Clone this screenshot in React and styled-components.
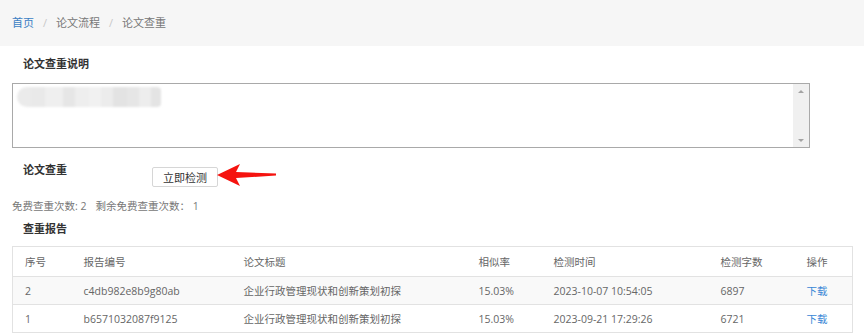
import styled, { createGlobalStyle } from "styled-components";

const GlobalStyle = createGlobalStyle`
  body {
    margin: 0;
    background: #fff;
    font-family: "Open Sans", "Noto Sans CJK SC", sans-serif;
    font-size: 10.5px;
    color: #666;
  }
`;

const Breadcrumb = styled.div`
  height: 46px;
  line-height: 46px;
  background: #f6f6f6;
  padding-left: 12px;
  color: #777;
  display: flex;
  gap: 9px;
  font-size: 11px;
`;

const Crumb = styled.span`
  color: ${(p) => (p.$active ? "#3b7fc4" : "#777")};
`;

const Sep = styled.span`
  color: #c8c8c8;
`;

const Page = styled.div`
  padding: 0 12px;
  display: flex;
  flex-direction: column;
  align-items: flex-start;
`;

const SectionTitle = styled.div`
  font-weight: bold;
  font-size: 11px;
  color: #333;
  margin-left: 11px;
  line-height: ${(p) => p.$lh || 14}px;
  margin-top: ${(p) => p.$mt || 0}px;
  width: ${(p) => (p.$w ? p.$w + "px" : "auto")};
  flex-shrink: 0;
`;

const TextBox = styled.div`
  margin-top: 9px;
  width: 798px;
  height: 65px;
  box-sizing: border-box;
  border: 1px solid #a9a9a9;
  display: flex;
  justify-content: space-between;
`;

const Blur = styled.div`
  margin: 3px 0 0 4px;
  height: 20px;
  display: flex;
  filter: blur(1px);
  border-radius: 10px 4px 4px 10px;
  overflow: hidden;
`;

const BlurCell = styled.div`
  width: ${(p) => p.$w}px;
  background: ${(p) => p.$c};
`;

const ScrollTrack = styled.div`
  width: 16px;
  background: #f0f0f0;
  display: flex;
  flex-direction: column;
  justify-content: space-between;
  align-items: center;
  padding: 6px 0 5px;
  box-sizing: border-box;
`;

const Tri = styled.div`
  width: 0;
  height: 0;
  border-left: 3px solid transparent;
  border-right: 3px solid transparent;
  ${(p) =>
    p.$up
      ? "border-bottom: 3px solid #a3a3a3;"
      : "border-top: 3px solid #a3a3a3;"}
`;

const CheckRow = styled.div`
  margin-top: 15px;
  display: flex;
  align-items: flex-start;
`;

const Button = styled.button`
  margin-top: 4px;
  height: 20px;
  width: 66px;
  padding: 0;
  background: #fff;
  border: 1px solid #d6d6d6;
  border-radius: 2px;
  font-family: inherit;
  font-size: 11px;
  color: #333;
`;

const Arrow = styled.svg`
  margin-left: -3px;
  margin-top: 0;
`;

const Stats = styled.div`
  margin-top: 12px;
  line-height: 14px;
  color: #777;
`;

const Gap = styled.span`
  display: inline-block;
  width: 9px;
`;

const Table = styled.table`
  margin-top: 10px;
  width: 840px;
  border-collapse: collapse;
  border: 1px solid #e2e2e2;
  table-layout: fixed;
`;

const Th = styled.th`
  height: 29px;
  text-align: left;
  font-weight: normal;
  color: #666;
  padding: 0 0 0 12px;
  border-bottom: 1px solid #e2e2e2;
`;

const Tr = styled.tr`
  background: ${(p) => (p.$striped ? "#f9f9f9" : "#fff")};
`;

const Td = styled.td`
  height: 27px;
  padding: 0 0 0 12px;
  color: #666;
  border-bottom: 1px solid #e2e2e2;
  white-space: nowrap;
`;

const Link = styled.a`
  color: #3a87d6;
  text-decoration: none;
`;

const cols = [
  ["序号", 59],
  ["报告编号", 160],
  ["论文标题", 235],
  ["相似率", 75],
  ["检测时间", 167],
  ["检测字数", 86],
  ["操作", 58],
];

const rows = [
  ["2", "c4db982e8b9g80ab", "企业行政管理现状和创新策划初探", "15.03%", "2023-10-07 10:54:05", "6897"],
  ["1", "b6571032087f9125", "企业行政管理现状和创新策划初探", "15.03%", "2023-09-21 17:29:26", "6721"],
];

const blur = [
  [14, "#ebebeb"], [14, "#e9e9e9"], [18, "#efefef"], [12, "#e6e6e6"], [14, "#eeeeee"],
  [12, "#f1f1f1"], [12, "#ececec"], [14, "#e3e3e3"], [12, "#e6e6e6"], [12, "#ededed"], [10, "#e4e4e4"],
];

export default function App() {
  return (
    <>
      <GlobalStyle />
      <Breadcrumb>
        <Crumb $active>首页</Crumb>
        <Sep>/</Sep>
        <Crumb>论文流程</Crumb>
        <Sep>/</Sep>
        <Crumb>论文查重</Crumb>
      </Breadcrumb>
      <Page>
        <SectionTitle $lh={20} $mt={8}>论文查重说明</SectionTitle>
        <TextBox>
          <Blur>
            {blur.map(([w, c], i) => (
              <BlurCell key={i} $w={w} $c={c} />
            ))}
          </Blur>
          <ScrollTrack>
            <Tri $up />
            <Tri />
          </ScrollTrack>
        </TextBox>
        <CheckRow>
          <SectionTitle $w={129}>论文查重</SectionTitle>
          <Button>立即检测</Button>
          <Arrow width="62" height="24" viewBox="0 0 62 24">
            <path d="M2 12 L25 1 L21 9 L61 10.5 L61 12.5 L21 15 L25 23 Z" fill="#f5130f" />
          </Arrow>
        </CheckRow>
        <Stats>
          免费查重次数: 2<Gap />剩余免费查重次数： 1
        </Stats>
        <SectionTitle $mt={9}>查重报告</SectionTitle>
        <Table>
          <colgroup>
            {cols.map(([, w], i) => (
              <col key={i} style={{ width: w }} />
            ))}
          </colgroup>
          <thead>
            <tr>
              {cols.map(([t], i) => (
                <Th key={i}>{t}</Th>
              ))}
            </tr>
          </thead>
          <tbody>
            {rows.map((r, i) => (
              <Tr key={i} $striped={i === 0}>
                {r.map((c, j) => (
                  <Td key={j}>{c}</Td>
                ))}
                <Td>
                  <Link href="#">下载</Link>
                </Td>
              </Tr>
            ))}
          </tbody>
        </Table>
      </Page>
    </>
  );
}
